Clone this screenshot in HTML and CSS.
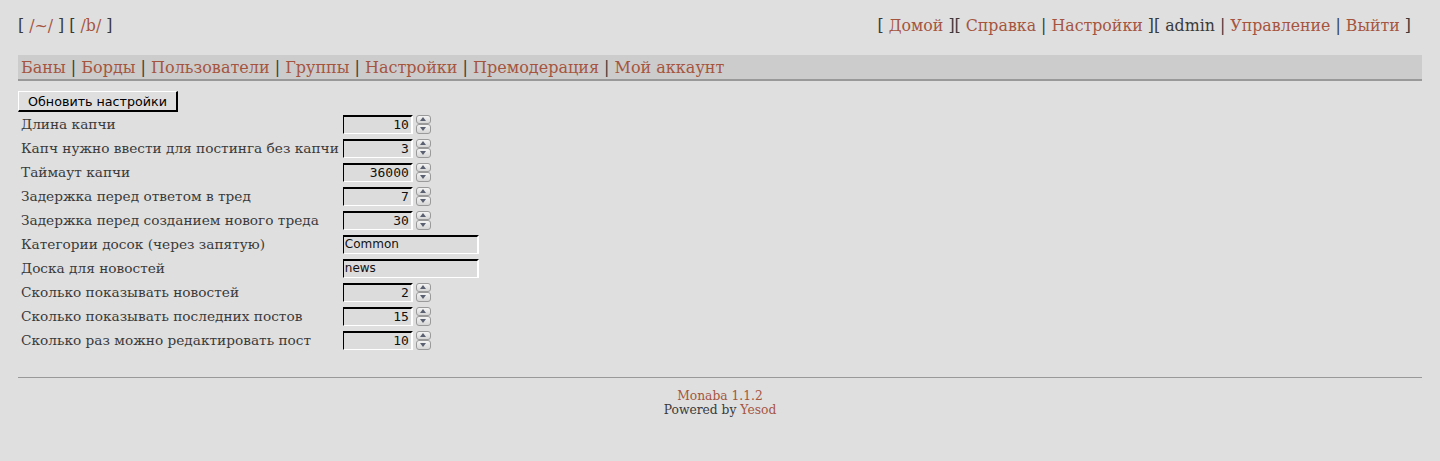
FILE: index.html
```html
<!DOCTYPE html>
<html lang="ru">
<head>
<meta charset="utf-8">
<title>Monaba</title>
<link rel="stylesheet" href="styles.css">
</head>
<body>
<header class="top">
  <div class="boards">[ <a href="#">/~/</a> ] [ <a href="#">/b/</a> ]</div>
  <div class="usermenu">[ <a href="#">Домой</a> ][ <a href="#">Справка</a> | <a href="#">Настройки</a> ][ admin | <a href="#">Управление</a> | <a href="#">Выйти</a> ]</div>
</header>
<nav class="adminnav">
  <a href="#">Баны</a> | <a href="#">Борды</a> | <a href="#">Пользователи</a> | <a href="#">Группы</a> | <a href="#">Настройки</a> | <a href="#">Премодерация</a> | <a href="#">Мой аккаунт</a>
</nav>
<form class="settings">
  <button type="button" class="btn">Обновить настройки</button>
  <table class="grid">
    <tr><td class="lbl">Длина капчи</td><td><span class="num"><span class="field">10</span><span class="spin"><i class="up"></i><i class="down"></i></span></span></td></tr>
    <tr><td class="lbl">Капч нужно ввести для постинга без капчи</td><td><span class="num"><span class="field">3</span><span class="spin"><i class="up"></i><i class="down"></i></span></span></td></tr>
    <tr><td class="lbl">Таймаут капчи</td><td><span class="num"><span class="field">36000</span><span class="spin"><i class="up"></i><i class="down"></i></span></span></td></tr>
    <tr><td class="lbl">Задержка перед ответом в тред</td><td><span class="num"><span class="field">7</span><span class="spin"><i class="up"></i><i class="down"></i></span></span></td></tr>
    <tr><td class="lbl">Задержка перед созданием нового треда</td><td><span class="num"><span class="field">30</span><span class="spin"><i class="up"></i><i class="down"></i></span></span></td></tr>
    <tr><td class="lbl">Категории досок (через запятую)</td><td><span class="text">Common</span></td></tr>
    <tr><td class="lbl">Доска для новостей</td><td><span class="text">news</span></td></tr>
    <tr><td class="lbl">Сколько показывать новостей</td><td><span class="num"><span class="field">2</span><span class="spin"><i class="up"></i><i class="down"></i></span></span></td></tr>
    <tr><td class="lbl">Сколько показывать последних постов</td><td><span class="num"><span class="field">15</span><span class="spin"><i class="up"></i><i class="down"></i></span></span></td></tr>
    <tr><td class="lbl">Сколько раз можно редактировать пост</td><td><span class="num"><span class="field">10</span><span class="spin"><i class="up"></i><i class="down"></i></span></span></td></tr>
  </table>
</form>
<footer class="foot">
  <div><a href="#">Monaba 1.1.2</a></div>
  <div>Powered by <a href="#">Yesod</a></div>
</footer>
</body>
</html>
```

FILE: styles.css
```css
html, body {
  margin: 0;
  padding: 0;
  background: #dfdfdf;
}
body {
  padding: 0 18px;
  color: #3a3a3a;
  font-family: "DejaVu Serif", serif;
}
a {
  color: #a5553f;
  text-decoration: none;
}
.top {
  display: flex;
  justify-content: space-between;
  align-items: center;
  height: 26px;
  padding-top: 12px;
  padding-right: 11px;
  font-size: 15.8px;
}
.adminnav {
  margin-top: 17px;
  background: #cccccc;
  border-bottom: 2px solid #999;
  height: 24px;
  line-height: 25px;
  padding-left: 3px;
  font-size: 16px;
}
.settings {
  margin-top: 10px;
}
.btn {
  display: block;
  box-sizing: border-box;
  font-family: "DejaVu Sans", sans-serif;
  font-size: 12.7px;
  color: #000;
  background: #dfdfdf;
  border-style: solid;
  border-color: #fff #000 #000 #fff;
  border-width: 1px 2px 2px 1px;
  padding: 0;
  height: 21px;
  width: 160px;
  line-height: 17px;
  text-align: center;
}
.grid {
  border-collapse: separate;
  border-spacing: 2px;
  margin-top: -1px;
}
.grid td {
  padding: 1px;
  height: 20px;
  font-size: 13.7px;
  white-space: nowrap;
  vertical-align: middle;
}
.num {
  display: flex;
  align-items: center;
  gap: 3px;
}
.field, .text {
  display: block;
  box-sizing: border-box;
  height: 19px;
  border-style: solid;
  border-color: #000 #fff #fff #000;
  border-width: 2px 2px 1px 1px;
  background: #dcdcdc;
  color: #111;
}
.field {
  width: 70px;
  text-align: right;
  padding-right: 2px;
  font-family: "DejaVu Sans Mono", monospace;
  font-size: 13px;
  line-height: 15px;
}
.text {
  width: 136px;
  padding-left: 1px;
  font-family: "DejaVu Sans", sans-serif;
  font-size: 12px;
  line-height: 15px;
}
.spin {
  display: flex;
  flex-direction: column;
  width: 15px;
}
.spin i {
  position: relative;
  display: block;
  box-sizing: border-box;
  height: 9.5px;
  border: 1px solid #9a9a9a;
  border-radius: 3px;
  background: linear-gradient(#f4f4f4, #d6d6d6);
}
.spin i::after {
  content: "";
  position: absolute;
  left: 3px;
  width: 0;
  height: 0;
  border-left: 3.5px solid transparent;
  border-right: 3.5px solid transparent;
}
.spin .up::after {
  top: 1.5px;
  border-bottom: 4px solid #5a6070;
}
.spin .down::after {
  top: 2px;
  border-top: 4px solid #5a6070;
}
.foot {
  margin-top: 24px;
  border-top: 1px solid #999;
  padding-top: 11px;
  text-align: center;
  font-size: 12.3px;
  line-height: 14px;
}
```
